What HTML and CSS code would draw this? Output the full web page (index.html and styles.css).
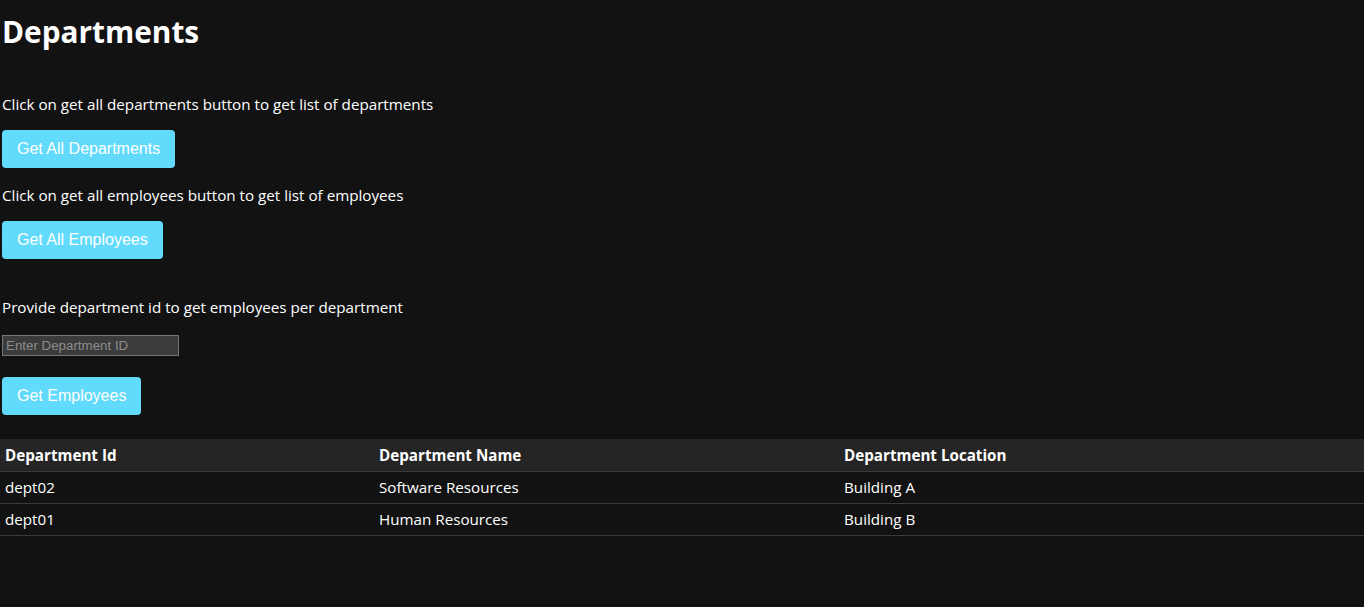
FILE: index.html
```html
<!DOCTYPE html>
<html lang="en">
<head>
<meta charset="utf-8">
<title>Departments</title>
<link rel="stylesheet" href="styles.css">
</head>
<body>
<main class="page">
  <div class="controls">
    <h1 class="title">Departments</h1>
    <p class="lead lead-first">Click on get all departments button to get list of departments</p>
    <button class="btn btn-first" type="button">Get All Departments</button>
    <p class="lead lead-second">Click on get all employees button to get list of employees</p>
    <button class="btn btn-second" type="button">Get All Employees</button>
    <p class="lead lead-third">Provide department id to get employees per department</p>
    <input class="dept-input" type="text" placeholder="Enter Department ID">
    <button class="btn btn-third" type="button">Get Employees</button>
  </div>
  <table class="data-table">
    <thead>
      <tr>
        <th class="col-id">Department Id</th>
        <th class="col-name">Department Name</th>
        <th class="col-loc">Department Location</th>
      </tr>
    </thead>
    <tbody>
      <tr>
        <td>dept02</td>
        <td>Software Resources</td>
        <td>Building A</td>
      </tr>
      <tr>
        <td>dept01</td>
        <td>Human Resources</td>
        <td>Building B</td>
      </tr>
    </tbody>
  </table>
</main>
</body>
</html>
```

FILE: styles.css
```css
html, body {
  margin: 0;
  padding: 0;
  background: #121212;
}

body {
  color: #ffffff;
  font-family: "Open Sans", "Noto Sans", sans-serif;
  font-size: 15.2px;
}

.page {
  display: flex;
  flex-direction: column;
}

.controls {
  display: flex;
  flex-direction: column;
  align-items: flex-start;
  padding: 0 2px;
}

.title {
  margin: 10px 0 0;
  height: 44px;
  line-height: 44px;
  font-size: 29.8px;
  font-weight: 700;
}

.lead {
  margin: 0;
  height: 22px;
  line-height: 22px;
}

.lead-first { margin-top: 39px; }
.lead-second { margin-top: 16px; }
.lead-third { margin-top: 37px; }

.btn {
  height: 38px;
  padding: 0 15px;
  border: none;
  border-radius: 4px;
  background: #61dafb;
  color: #ffffff;
  font-family: "Liberation Sans", Arial, sans-serif;
  font-size: 16px;
  margin-top: 15px;
}

.btn-third { margin-top: 21px; }

.dept-input {
  margin-top: 17px;
  box-sizing: border-box;
  width: 177px;
  height: 21px;
  padding: 1px 3px;
  border: 1px solid #767676;
  background: #3b3b3b;
  color: #ffffff;
  font-family: "Liberation Sans", Arial, sans-serif;
  font-size: 13.33px;
}

.dept-input::placeholder {
  color: #8c8c8c;
}

.data-table {
  margin-top: 24px;
  width: 100%;
  border-collapse: collapse;
  table-layout: fixed;
}

.data-table th,
.data-table td {
  height: 32px;
  padding: 0 5px;
  text-align: left;
  border-bottom: 1px solid #3a3a3a;
  box-sizing: border-box;
}

.data-table th {
  background: #252525;
  font-weight: 700;
}

.col-id { width: 374px; }
.col-name { width: 465px; }
```
